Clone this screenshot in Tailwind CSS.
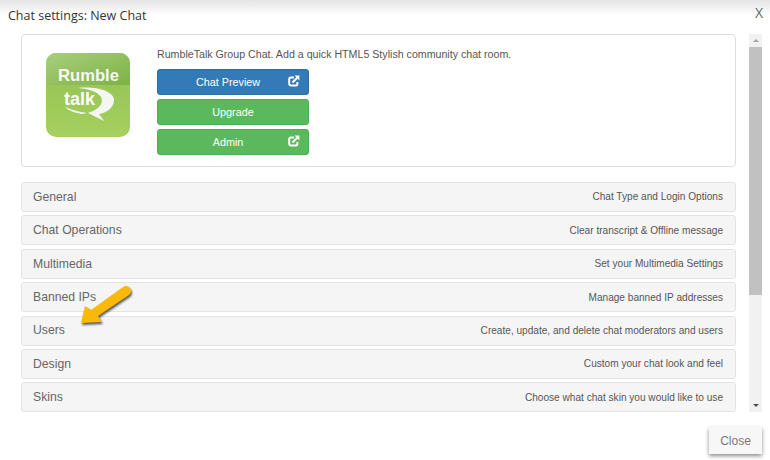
<!DOCTYPE html>
<html lang="en">
<head>
    <meta charset="UTF-8">
    <title>Chat settings</title>
    <script src="https://cdn.jsdelivr.net/npm/@tailwindcss/browser@4"></script>
</head>
<body class="relative w-[770px] h-[460px] overflow-hidden bg-white font-['Liberation_Sans',sans-serif] text-[#555]">
    <!-- header -->
    <div class="h-[34px] pl-2 pr-[7px] pt-[7px] flex justify-between bg-gradient-to-b from-[#e4e4e4] via-white via-[45%] to-white">
        <h1 class="font-['Open_Sans',sans-serif] text-[12.5px] leading-[18px] text-[#333]">Chat settings: New Chat</h1>
        <span class="font-['Open_Sans',sans-serif] text-[14px] leading-[12px] text-[#666]">X</span>
    </div>

    <div class="flex h-[378px]">
        <div class="ml-[21px] w-[715px] flex flex-col overflow-hidden">
            <!-- app card -->
            <div class="h-[133px] shrink-0 flex border border-[#ddd] rounded-[4px] pl-[24px] pt-[18px]">
                <div class="relative w-[84px] h-[84px] shrink-0 rounded-[10px] overflow-hidden bg-gradient-to-b from-[#8fc052] to-[#a6d05f]">
                    <div class="absolute left-0 top-0 w-full h-[32px] bg-gradient-to-br from-[#a8cf80] via-[#93c060] to-[#7db146]"></div>
                    <p class="absolute left-0 w-full top-[13px] pl-[1px] text-center font-bold text-[16.6px] leading-[20px] text-[#f6f8f2]">Rumble</p>
                    <svg class="absolute left-0 top-0" width="84" height="84" viewBox="0 0 84 84">
                        <path d="M32 35C50 33 68 38 68 47 68 55 60 60 53 61L58 68 42 60C48 58 59 53 55 44 51 38 42 36 32 35z" fill="#f4f6f1"/>
                        <path d="M19 54C26 57 33 59 41 60L36 61C30 60 23 58 19 54z" fill="#f4f6f1"/>
                    </svg>
                    <p class="absolute left-[18px] top-[36px] font-bold text-[18px] leading-[20px] text-white">talk</p>
                </div>
                <div class="ml-[27px] -mt-[6px] flex flex-col">
                    <p class="text-[10.65px] leading-[13px] mt-[1px] text-[#555]">RumbleTalk Group Chat. Add a quick HTML5 Stylish community chat room.</p>
                    <a class="relative mt-[8px] w-[152px] h-[26px] rounded-[3px] bg-[#337ab7] border border-[#2e6da4] text-white text-[10.8px] leading-[24px] text-center pr-[10px]">Chat Preview
                        <svg class="absolute right-[8px] top-[5px]" width="12" height="12" viewBox="0 0 12 12" fill="none" stroke="#fff" stroke-width="2"><path d="M6 2.4H3A1.8 1.8 0 0 0 1.2 4.2v4.6A1.8 1.8 0 0 0 3 10.6h4.6a1.8 1.8 0 0 0 1.8-1.8V7"/><path d="M4.5 7.5 10 2"/><path d="M6.6.6h4.8v4.8z" fill="#fff" stroke="none"/></svg>
                    </a>
                    <a class="mt-[4px] w-[152px] h-[26px] rounded-[3px] bg-[#5cb85c] border border-[#4cae4c] text-white text-[10.8px] leading-[24px] text-center">Upgrade</a>
                    <a class="relative mt-[4px] w-[152px] h-[26px] rounded-[3px] bg-[#5cb85c] border border-[#4cae4c] text-white text-[10.8px] leading-[24px] text-center pr-[10px]">Admin
                        <svg class="absolute right-[8px] top-[5px]" width="12" height="12" viewBox="0 0 12 12" fill="none" stroke="#fff" stroke-width="2"><path d="M6 2.4H3A1.8 1.8 0 0 0 1.2 4.2v4.6A1.8 1.8 0 0 0 3 10.6h4.6a1.8 1.8 0 0 0 1.8-1.8V7"/><path d="M4.5 7.5 10 2"/><path d="M6.6.6h4.8v4.8z" fill="#fff" stroke="none"/></svg>
                    </a>
                </div>
            </div>

            <!-- settings rows -->
            <div class="mt-[15px] flex flex-col gap-[3.4px]">
                <div class="h-[30px] flex items-center justify-between pl-[11px] pr-[12px] rounded-[3px] border border-[#e3e3e3] bg-[#f5f5f5]"><span class="text-[12.2px] text-[#666]">General</span><span class="text-[10.1px]">Chat Type and Login Options</span></div>
                <div class="h-[30px] flex items-center justify-between pl-[11px] pr-[12px] rounded-[3px] border border-[#e3e3e3] bg-[#f5f5f5]"><span class="text-[12.2px] text-[#666]">Chat Operations</span><span class="text-[10.1px]">Clear transcript &amp; Offline message</span></div>
                <div class="h-[30px] flex items-center justify-between pl-[11px] pr-[12px] rounded-[3px] border border-[#e3e3e3] bg-[#f5f5f5]"><span class="text-[12.2px] text-[#666]">Multimedia</span><span class="text-[10.1px]">Set your Multimedia Settings</span></div>
                <div class="h-[30px] flex items-center justify-between pl-[11px] pr-[12px] rounded-[3px] border border-[#e3e3e3] bg-[#f5f5f5]"><span class="text-[12.2px] text-[#666]">Banned IPs</span><span class="text-[10.1px]">Manage banned IP addresses</span></div>
                <div class="h-[30px] flex items-center justify-between pl-[11px] pr-[12px] rounded-[3px] border border-[#e3e3e3] bg-[#f5f5f5]"><span class="text-[12.2px] text-[#666]">Users</span><span class="text-[10.1px]">Create, update, and delete chat moderators and users</span></div>
                <div class="h-[30px] flex items-center justify-between pl-[11px] pr-[12px] rounded-[3px] border border-[#e3e3e3] bg-[#f5f5f5]"><span class="text-[12.2px] text-[#666]">Design</span><span class="text-[10.1px]">Custom your chat look and feel</span></div>
                <div class="h-[30px] flex items-center justify-between pl-[11px] pr-[12px] rounded-[3px] border border-[#e3e3e3] bg-[#f5f5f5]"><span class="text-[12.2px] text-[#666]">Skins</span><span class="text-[10.1px]">Choose what chat skin you would like to use</span></div>
            </div>
        </div>

        <!-- scrollbar -->
        <div class="ml-[13px] w-[13px] h-full flex flex-col items-center bg-[#f1f1f1]">
            <div class="h-[13px] flex items-center"><div class="border-x-[3px] border-x-transparent border-b-[3px] border-b-[#a3a3a3]"></div></div>
            <div class="w-full h-[248px] bg-[#c1c1c1]"></div>
            <div class="mt-auto h-[13px] flex items-center"><div class="border-x-[3px] border-x-transparent border-t-[3px] border-t-[#505050]"></div></div>
        </div>
    </div>

    <!-- footer -->
    <div class="flex justify-end pt-[15px] pr-[8px]">
        <button class="w-[53px] h-[27px] bg-[#f7f7f7] text-[12px] text-[#777] shadow-[0_2px_4px_rgba(0,0,0,0.45)]">Close</button>
    </div>

    <!-- annotation arrow -->
    <svg class="absolute left-[76px] top-[280px] overflow-visible drop-shadow-[1px_2px_1px_rgba(0,0,0,0.65)]" width="62" height="52" viewBox="0 0 62 52">
        <path d="M5 43 9 26 15 30 47 7a4.5 4.5 0 0 1 6 8L22 36 26 42z" fill="#f9b90a"/>
    </svg>
</body>
</html>
